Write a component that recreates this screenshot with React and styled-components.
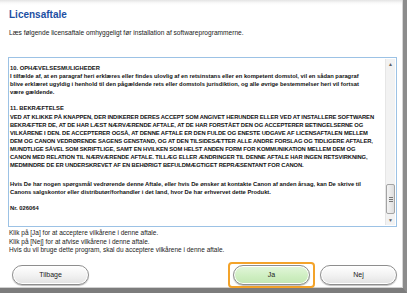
import React from "react";
import styled, { createGlobalStyle } from "styled-components";

const Global = createGlobalStyle`
  html, body { margin: 0; padding: 0; background: #fff; }
  * { box-sizing: border-box; }
`;

const Frame = styled.div`
  width: 407px;
  height: 293px;
  display: flex;
  flex-direction: column;
  background: linear-gradient(#e4e4e4 0px, #fafafa 3px, #ffffff 5px);
  border-right: 4px solid #8c8c8c;
  border-bottom: 5px solid #7c7c7c;
  box-shadow: inset -1px 0 0 #d6d6d6, inset 0 -1px 0 #d0d0d0;
  font-family: "Liberation Sans", Arial, sans-serif;
  color: #111;
  padding: 9px 6px 0 8px;
  overflow: hidden;
`;

const Title = styled.h1`
  margin: 0 0 0 1px;
  font-size: 10px;
  line-height: 12px;
  font-weight: 700;
  color: #1d4fa3;
`;

const Subtitle = styled.p`
  margin: 8px 0 0 1px;
  font-size: 6.6px;
  line-height: 8px;
  color: #222;
  white-space: nowrap;
`;

const TextBox = styled.div`
  margin-top: 20px;
  width: 389px;
  height: 170px;
  border: 1px solid #9cc2e5;
  display: flex;
  background: #fff;
`;

const Content = styled.div`
  flex: 1;
  padding: 6px 0 0 1px;
  overflow: hidden;
`;

const Line = styled.div`
  font-size: 5.8px;
  line-height: 8px;
  height: ${(p) => p.$h || 8.1}px;
  letter-spacing: ${(p) => (p.$caps ? "-0.1px" : "0")};
  font-weight: 700;
  white-space: nowrap;
  color: #111;
`;

const Scrollbar = styled.div`
  width: 10px;
  margin: 1px 1px 1px 0;
  display: flex;
  flex-direction: column;
  background: #f2f2f2;
  border-left: 1px solid #e6e6e6;
`;

const Arrow = styled.div`
  height: 10px;
  display: flex;
  align-items: center;
  justify-content: center;
  color: #606060;
  font-size: 5px;
`;

const Track = styled.div`
  flex: 1;
  display: flex;
  flex-direction: column;
  justify-content: flex-end;
`;

const Thumb = styled.div`
  height: 30px;
  margin: 0 0 1px 0;
  border: 1px solid #a4a4a4;
  border-radius: 2px;
  background: linear-gradient(90deg, #f4f4f4, #dedede);
  display: flex;
  align-items: center;
  justify-content: center;
`;

const Grip = styled.div`
  width: 4px;
  height: 5px;
  background: repeating-linear-gradient(#777 0 1px, transparent 1px 2px);
`;

const Notes = styled.div`
  margin-top: 2px;
  margin-left: 1px;
`;

const Note = styled.div`
  font-size: 6.5px;
  line-height: 8.5px;
  color: #222;
  white-space: nowrap;
`;

const ButtonRow = styled.div`
  margin-top: 7px;
  display: flex;
  align-items: center;
  padding-left: 4px;
`;

const Pill = styled.button`
  width: 77px;
  height: 20px;
  border-radius: 10px;
  border: 1px solid #8e8e8e;
  background: ${(p) =>
    p.$green
      ? "linear-gradient(#e3f6da, #cdeec0 60%, #c2e6b3)"
      : "linear-gradient(#ffffff, #f1f1f1 55%, #e2e2e2)"};
  box-shadow: inset 0 0 0 1px #ffffff, 0 1px 1px rgba(0,0,0,0.25);
  font-family: "Liberation Sans", Arial, sans-serif;
  font-size: 7px;
  color: #222;
  padding: 0;
  cursor: pointer;
`;

const Focus = styled.div`
  margin-left: auto;
  padding: 1px 3px;
  border: 2px solid #f3a32a;
  border-radius: 4px;
  display: flex;
`;

const Spacer = styled.div`
  width: 5px;
`;

const lines = [
  "10. OPHÆVELSESMULIGHEDER",
  "I tilfælde af, at en paragraf heri erklæres eller findes ulovlig af en retsinstans eller en kompetent domstol, vil en sådan paragraf",
  "blive erklæret ugyldig i henhold til den pågældende rets eller domstols jurisdiktion, og alle øvrige bestemmelser heri vil fortsat",
  "være gældende.",
  "",
  "11. BEKRÆFTELSE",
  { caps: "VED AT KLIKKE PÅ KNAPPEN, DER INDIKERER DERES ACCEPT SOM ANGIVET HERUNDER ELLER VED AT INSTALLERE SOFTWAREN" },
  { caps: "BEKRÆFTER DE, AT DE HAR LÆST NÆRVÆRENDE AFTALE, AT DE HAR FORSTÅET DEN OG ACCEPTERER BETINGELSERNE OG" },
  { caps: "VILKÅRENE I DEN.  DE ACCEPTERER OGSÅ, AT DENNE AFTALE ER DEN FULDE OG ENESTE UDGAVE AF LICENSAFTALEN MELLEM" },
  { caps: "DEM OG CANON VEDRØRENDE SAGENS GENSTAND, OG AT DEN TILSIDESÆTTER ALLE ANDRE FORSLAG OG TIDLIGERE AFTALER," },
  { caps: "MUNDTLIGE SÅVEL SOM SKRIFTLIGE, SAMT EN HVILKEN SOM HELST ANDEN FORM FOR KOMMUNIKATION MELLEM DEM OG" },
  { caps: "CANON MED RELATION TIL NÆRVÆRENDE AFTALE.  TILLÆG ELLER ÆNDRINGER TIL DENNE AFTALE HAR INGEN RETSVIRKNING," },
  { caps: "MEDMINDRE DE ER UNDERSKREVET AF EN BEHØRIGT BEFULDMÆGTIGET REPRÆSENTANT FOR CANON." },
  { gap: 11 },
  "Hvis De har nogen spørgsmål vedrørende denne Aftale, eller hvis De ønsker at kontakte Canon af anden årsag, kan De skrive til",
  "Canons salgskontor eller distributør/forhandler i det land, hvor De har erhvervet dette Produkt.",
  { gap: 8 },
  "Nr. 026064",
];

export default function App() {
  return (
    <>
      <Global />
      <Frame>
        <Title>Licensaftale</Title>
        <Subtitle>
          Læs følgende licensaftale omhyggeligt før installation af softwareprogrammerne.
        </Subtitle>
        <TextBox>
          <Content>
            {lines.map((l, i) => {
              if (typeof l === "string") return <Line key={i}>{l || "\u00a0"}</Line>;
              if (l.caps) return <Line key={i} $caps>{l.caps}</Line>;
              return <Line key={i} $h={l.gap} />;
            })}
          </Content>
          <Scrollbar>
            <Arrow>▲</Arrow>
            <Track>
              <Thumb>
                <Grip />
              </Thumb>
            </Track>
            <Arrow>▼</Arrow>
          </Scrollbar>
        </TextBox>
        <Notes>
          <Note>Klik på [Ja] for at acceptere vilkårene i denne aftale.</Note>
          <Note>Klik på [Nej] for at afvise vilkårene i denne aftale.</Note>
          <Note>Hvis du vil bruge dette program, skal du acceptere vilkårene i denne aftale.</Note>
        </Notes>
        <ButtonRow>
          <Pill>Tilbage</Pill>
          <Focus>
            <Pill $green>Ja</Pill>
          </Focus>
          <Spacer />
          <Pill>Nej</Pill>
        </ButtonRow>
      </Frame>
    </>
  );
}
